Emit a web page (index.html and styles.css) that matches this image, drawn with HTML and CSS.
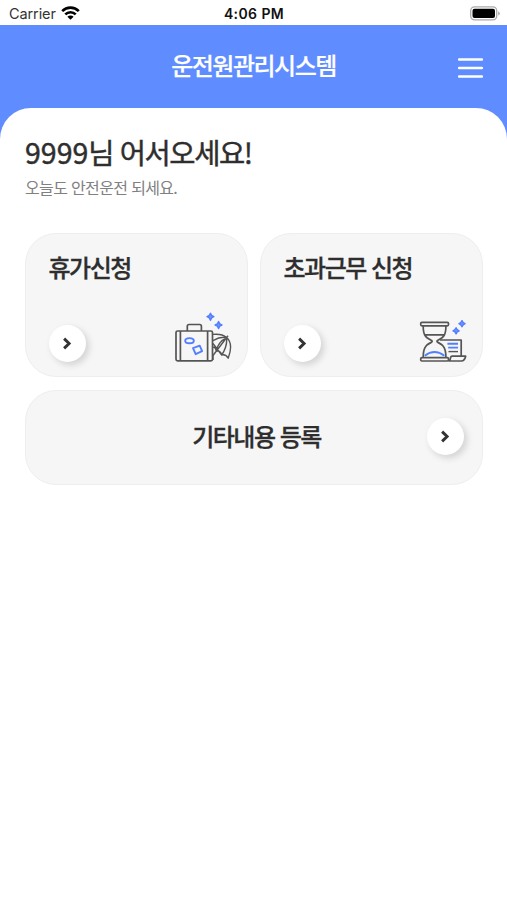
FILE: index.html
```html
<!DOCTYPE html>
<html lang="ko">
<head>
<meta charset="utf-8">
<meta name="viewport" content="width=device-width, initial-scale=1">
<title>운전원관리시스템</title>
<link rel="stylesheet" href="styles.css">
</head>
<body>
<div class="status">
  <div class="carrier"><span>Carrier</span>
    <svg width="19" height="14" viewBox="0 0 19 14" fill="none" stroke="#000" stroke-width="2.7"><path d="M1.2 5.1a11.8 11.8 0 0 1 16.6 0M4.3 8.4a7.4 7.4 0 0 1 10.4 0"/><path d="M9.5 13.8 6.4 10.7a4.4 4.4 0 0 1 6.2 0Z" fill="#000" stroke="none"/></svg>
  </div>
  <div class="time">4:06 PM</div>
  <div class="battery">
    <svg width="30" height="15" viewBox="0 0 30 15"><rect x=".7" y=".9" width="26" height="13" rx="3.8" fill="#fff" stroke="#aaa" stroke-width="1.3"/><rect x="2.5" y="2.7" width="22.5" height="9.4" rx="2" fill="#000"/><path d="M28.2 5.2q1.6.7 1.6 2.2t-1.6 2.2Z" fill="#aaa"/></svg>
  </div>
</div>
<header class="header">
  <h1 class="title">운전원관리시스템</h1>
  <button class="menu" aria-label="메뉴"><svg width="25" height="20" viewBox="0 0 25 20"><path d="M1 1.500h23M1 10h23M1 18.500h23"/></svg></button>
</header>
<main class="panel">
  <h2 class="greeting"><span class="user">9999</span>님 어서오세요!</h2>
  <p class="sub">오늘도 안전운전 되세요.</p>
  <div class="grid">
    <section class="card">
      <h3 class="label">휴가신청</h3>
      <div class="foot">
        <span class="go"><svg width="10" height="13" viewBox="0 0 10 13"><path d="m2.1 1.6 5 4.9-5 4.9"/></svg></span>
        <svg class="art" width="60" height="54" viewBox="174 310 60 54">
          <path d="M187.3 331v-4.8q0-1.7 1.7-1.7h10.7q1.7 0 1.7 1.7v4.8"/>
          <rect x="176" y="331" width="36.5" height="29.8" rx="1.6"/>
          <path d="M180.4 331v29.5M207.6 331v29.5"/>
          <path class="thin" d="M213 334.4C220 333.6 224 335.300 226.700 337.500 231.100 341.500 231.700 349 228.200 358.200 226.400 354.900 224.700 354.200 221.700 355 221 351.800 218.800 350.200 216.200 351.300 216 348.500 214.700 347.100 213 347.200M213 340.600Q220 336.500 226.700 337.500L213 355.500M216.200 351.300Q217.800 342 226.700 337.500M221.700 355Q227.300 347 226.700 337.500L228 335.800M213 343.500 221.700 355M213 355.500v4.500"/>
          <g class="blue"><ellipse cx="189.500" cy="340.700" rx="4.300" ry="2.600"/><path d="m193 348.100 6.700-2.400 2.400 5.500-6.400 3Z"/><path class="spark" d="m210.500 313.300 1.100 2.200 2.200 1.200-2.200 1.200-1.100 2.300-1.200-2.300-2.200-1.200 2.200-1.200ZM218.600 321.600l1.100 2.200 2.200 1.200-2.200 1.200-1.100 2.300-1.200-2.300-2.200-1.200 2.200-1.200Z"/></g>
        </svg>
      </div>
    </section>
    <section class="card">
      <h3 class="label">초과근무 신청</h3>
      <div class="foot">
        <span class="go"><svg width="10" height="13" viewBox="0 0 10 13"><path d="m2.1 1.6 5 4.9-5 4.9"/></svg></span>
        <svg class="art glass" width="50" height="54" viewBox="418 310 50 54">
          <rect x="420.700" y="322.400" width="27.800" height="3.400" rx="1.200"/>
          <rect x="420.700" y="357.700" width="27.800" height="3.300" rx="1.200"/>
          <path d="M423.200 326c0 7.500 1.200 11.200 8 14.200q1.900 1.100 0 2.200c-6.300 2.800-8 7-8 15.200M445.900 326c0 7.500-1.200 11.200-8 14.200q-1.900 1.100 0 2.200c6.300 2.800 8 7 8 15.200M424.300 334.800h20.500"/>
          <path d="M440 340h21.200v15.800M449 361h12.500q3 0 4.200-4.800h-13.500q-1.500 0-1.800 2.200-.4 2.600-2 2.600"/>
          <path class="thin" d="M448.500 351.600h9.500"/>
          <path class="blue" d="M424.700 355.700Q434.500 348.300 444.400 355.700M447.400 343.700H458M448.200 347.600H458"/>
          <path class="blue spark" d="m456.100 327.800 1.100 1.900 1.900 1.100-1.900 1.100-1.100 1.900-1.100-1.900-1.900-1.100 1.900-1.100ZM462 320.700l1.100 1.900 1.900 1.100-1.900 1.100-1.100 1.900-1.100-1.900-1.900-1.100 1.900-1.100Z"/>
        </svg>
      </div>
    </section>
    <section class="card wide">
      <h3 class="label">기타내용 등록</h3>
      <span class="go"><svg width="10" height="13" viewBox="0 0 10 13"><path d="m2.1 1.6 5 4.900-5 4.900"/></svg></span>
    </section>
  </div>
</main>
</body>
</html>
```
FILE: styles.css
```css
* { box-sizing: border-box; margin: 0; padding: 0; }
body {
  min-height: 100vh;
  display: flex;
  flex-direction: column;
  background: #5f8dff;
  color: #2e2e2e;
  font-family: "Noto Sans CJK KR", sans-serif;
}
.status {
  height: 25px;
  flex: none;
  display: grid;
  grid-template-columns: 1fr auto 1fr;
  align-items: center;
  padding: 1px 7px 0 9px;
  background: #fff;
  color: #111;
  font: 14.5px/24px Inter, sans-serif;
}
.carrier { display: flex; align-items: center; gap: 5px; color: #333; letter-spacing: -.1px; }
.carrier span { padding-top: 1px; }
.carrier svg { margin-top: -1px; }
.time { font-weight: 600; font-size: 14px; letter-spacing: .4px; padding: 1px 1px 0 0; }
.battery { display: flex; justify-content: flex-end; }
.header {
  height: 83px;
  flex: none;
  display: grid;
  grid-template-columns: 1fr auto 1fr;
  align-items: start;
  padding: 22px 25px 0 25px;
}
.title {
  grid-column: 2;
  color: #fff;
  font-size: 24px;
  line-height: 36px;
  font-weight: 500;
  letter-spacing: -1.500px;
  -webkit-text-stroke: .2px;
}
.menu {
  justify-self: end;
  margin: 11px -1px 0 0;
  border: 0;
  background: none;
}
.menu svg { display: block; fill: none; stroke: #fff; stroke-width: 2.300; stroke-linecap: round; }
.panel {
  flex: 1;
  padding: 23px 24px 0 25px;
  background: #fff;
  border-radius: 31px 31px 0 0;
}
.greeting {
  font-size: 28.500px;
  line-height: 42px;
  font-weight: 400;
  letter-spacing: -1.400px;
  -webkit-text-stroke: .45px;
}
.user { letter-spacing: 0; }
.sub { margin-top: 2px; color: #808080; font-size: 16px; line-height: 24px; font-weight: 400; letter-spacing: -.65px; }
.grid {
  display: grid;
  grid-template-columns: 1fr 1fr;
  gap: 12px;
  margin-top: 34px;
}
.card {
  height: 144px;
  display: flex;
  flex-direction: column;
  justify-content: space-between;
  padding: 15px 13px 12px 22.500px;
  border: 1px solid #eee;
  border-radius: 31px;
  background: #f6f6f6;
}
.label {
  font-size: 24px;
  line-height: 36px;
  font-weight: 500;
  letter-spacing: -1.500px;
  -webkit-text-stroke: .3px;
}
.foot { display: flex; justify-content: space-between; align-items: flex-end; }
.go {
  width: 37px;
  height: 37px;
  display: flex;
  align-items: center;
  justify-content: center;
  border-radius: 50%;
  background: #fff;
  box-shadow: 3px 3px 7px rgba(0, 0, 0, .15);
}
.go svg { margin-right: 1px; }
.go path { fill: none; stroke: #333; stroke-width: 2.900; }
.foot .go { margin-bottom: 2px; }
.art { fill: none; stroke: #555; stroke-width: 1.700; stroke-linejoin: round; }
.glass { margin-right: 1.500px; }
.art .thin { stroke-width: 1.400; }
.blue { stroke: #527fff; stroke-width: 1.900; }
.spark { fill: #7598ff; stroke-width: 1.500; }
.wide {
  grid-column: 1 / -1;
  height: 94.500px;
  margin-top: 1px;
  display: grid;
  grid-template-columns: 1fr auto 1fr;
  align-items: center;
  padding: 0 18.500px 1px;
}
.wide .label { grid-column: 2; padding: 0 0 1px 5px; }
.wide .go { justify-self: end; }
```
